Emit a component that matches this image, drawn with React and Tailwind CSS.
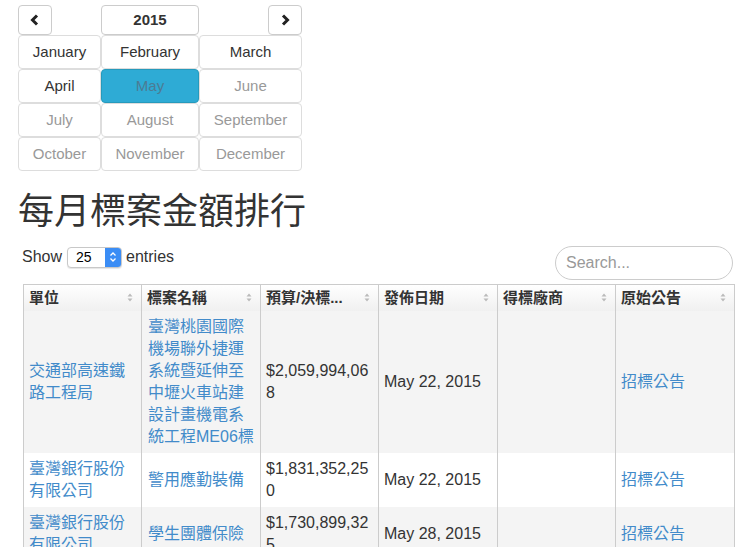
import React from 'react'

const FONT = { fontFamily: '"Liberation Sans", "Noto Sans CJK TC", sans-serif' }

const MONTHS = [
  ['January', 'text-[#333]'],
  ['February', 'text-[#333]'],
  ['March', 'text-[#333]'],
  ['April', 'text-[#333]'],
  ['May', 'active'],
  ['June', 'text-[#999]'],
  ['July', 'text-[#999]'],
  ['August', 'text-[#999]'],
  ['September', 'text-[#999]'],
  ['October', 'text-[#999]'],
  ['November', 'text-[#999]'],
  ['December', 'text-[#999]'],
]

const ROWS = [
  {
    unit: ['交通部高速鐵', '路工程局'],
    name: ['臺灣桃園國際', '機場聯外捷運', '系統暨延伸至', '中壢火車站建', '設計畫機電系', '統工程ME06標'],
    budget: ['$2,059,994,06', '8'],
    date: 'May 22, 2015',
  },
  {
    unit: ['臺灣銀行股份', '有限公司'],
    name: ['警用應勤裝備'],
    budget: ['$1,831,352,25', '0'],
    date: 'May 22, 2015',
  },
  {
    unit: ['臺灣銀行股份', '有限公司'],
    name: ['學生團體保險'],
    budget: ['$1,730,899,32', '5'],
    date: 'May 28, 2015',
  },
]

const HEADERS = ['單位', '標案名稱', '預算/決標...', '發佈日期', '得標廠商', '原始公告']

function Chevron({ dir }) {
  return (
    <svg width="10" height="12" viewBox="0 0 10 12">
      <path
        d={dir === 'left' ? 'M7 1.5 L2.5 6 L7 10.5' : 'M3 1.5 L7.5 6 L3 10.5'}
        fill="none"
        stroke="#222"
        strokeWidth="3"
        strokeLinejoin="miter"
      />
    </svg>
  )
}

function SortIcon() {
  return (
    <svg width="6" height="9" viewBox="0 0 6 9">
      <path d="M3 0.5 L5.5 3.5 H0.5 Z" fill="#bbb" />
      <path d="M3 8.5 L5.5 5.5 H0.5 Z" fill="#bbb" />
    </svg>
  )
}

function Lines({ lines }) {
  return lines.map((l, i) => (
    <span key={i} className="block whitespace-nowrap">
      {l}
    </span>
  ))
}

function MonthPicker() {
  return (
    <div className="ml-[18px] mt-[5px] w-[284px]">
      <div className="grid grid-cols-[83px_98px_103px]">
        <div>
          <button className="flex h-[30px] w-[34px] items-center justify-center rounded-[4px] border border-[#ccc] bg-white">
            <Chevron dir="left" />
          </button>
        </div>
        <button className="h-[30px] rounded-[4px] border border-[#ccc] bg-white text-[15px] font-bold text-[#333]">
          2015
        </button>
        <div className="flex justify-end">
          <button className="flex h-[30px] w-[34px] items-center justify-center rounded-[4px] border border-[#ccc] bg-white">
            <Chevron dir="right" />
          </button>
        </div>
      </div>
      <div className="grid grid-cols-[83px_98px_103px]">
        {MONTHS.map(([m, c]) =>
          c === 'active' ? (
            <button
              key={m}
              className="h-[34px] rounded-[4px] border border-[#269abc] bg-[#2eabd5] text-[15px] text-[#4c7b94]"
            >
              {m}
            </button>
          ) : (
            <button key={m} className={`h-[34px] rounded-[4px] border border-[#ddd] bg-white text-[15px] ${c}`}>
              {m}
            </button>
          )
        )}
      </div>
    </div>
  )
}

export default function App() {
  return (
    <div className="h-[547px] w-[747px] overflow-hidden bg-white text-[#333]" style={FONT}>
      <MonthPicker />
      <h1 className="ml-[18px] mt-[16px] text-[36px] leading-[50px] font-normal text-[#333]">每月標案金額排行</h1>

      <div className="mt-[9px] flex items-start justify-between pl-[22px] pr-[14px]">
        <div className="-mt-[1px] flex items-center text-[16px]">
          <span>Show</span>
          <div className="ml-[5px] flex h-[21px] w-[55px] items-center overflow-hidden rounded-[4px] border border-[#c8c8c8] bg-white shadow-[0_1px_1px_rgba(0,0,0,0.1)]">
            <span className="flex-1 pl-[8px] text-[14px] text-black">25</span>
            <span className="flex h-full w-[16px] items-center justify-center bg-[#3b8df5]">
              <svg width="8" height="12" viewBox="0 0 8 12">
                <path d="M1.5 4.5 L4 2 L6.5 4.5 M1.5 7.5 L4 10 L6.5 7.5" fill="none" stroke="#fff" strokeWidth="1.3" />
              </svg>
            </span>
          </div>
          <span className="ml-[4px]">entries</span>
        </div>
        <div className="flex h-[34px] w-[178px] items-center rounded-full border border-[#ccc] bg-white pl-[10px] text-[16px] text-[#999]">
          Search...
        </div>
      </div>

      <table className="ml-[23px] mt-[4px] w-[711px] table-fixed border-collapse">
        <colgroup>
          <col className="w-[118px]" />
          <col className="w-[119px]" />
          <col className="w-[118px]" />
          <col className="w-[119px]" />
          <col className="w-[118px]" />
          <col className="w-[119px]" />
        </colgroup>
        <thead>
          <tr className="bg-gradient-to-b from-white to-[#f0f0f0]">
            {HEADERS.map((h) => (
              <th
                key={h}
                className="h-[26px] border border-b-0 border-[#ccc] px-[5px] text-left text-[15px] font-bold text-[#333]"
              >
                <div className="flex items-center justify-between">
                  <span className="whitespace-nowrap">{h}</span>
                  <span className="mr-[3px]">
                    <SortIcon />
                  </span>
                </div>
              </th>
            ))}
          </tr>
        </thead>
        <tbody>
          {ROWS.map((r, i) => (
            <tr key={i} className={i % 2 === 0 ? 'bg-[#f4f4f4]' : 'bg-white'}>
              <td className="border-x border-[#ccc] px-[5px] pt-[5px] pb-[5px] align-middle text-[16px] leading-[22px] text-[#428bca]">
                <Lines lines={r.unit} />
              </td>
              <td className="border-x border-[#ccc] px-[6px] pt-[5px] pb-[5px] align-middle text-[16px] leading-[22px] text-[#428bca]">
                <Lines lines={r.name} />
              </td>
              <td className="border-x border-[#ccc] px-[5px] pt-[5px] pb-[5px] align-middle text-[16px] leading-[22px]">
                <Lines lines={r.budget} />
              </td>
              <td className="border-x border-[#ccc] px-[5px] pt-[5px] pb-[5px] align-middle text-[16px] leading-[22px] whitespace-nowrap">
                {r.date}
              </td>
              <td className="border-x border-[#ccc] px-[5px] pt-[5px] pb-[5px] align-middle text-[16px] leading-[22px]"></td>
              <td className="border-x border-[#ccc] px-[5px] pt-[5px] pb-[5px] align-middle text-[16px] leading-[22px] text-[#428bca]">
                招標公告
              </td>
            </tr>
          ))}
        </tbody>
      </table>
    </div>
  )
}
